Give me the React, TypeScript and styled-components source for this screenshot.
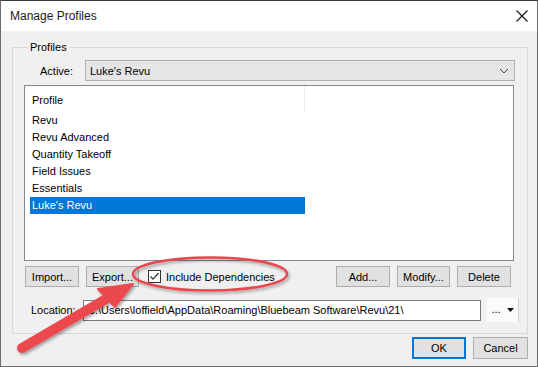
import styled, { createGlobalStyle } from "styled-components";

const GlobalStyle = createGlobalStyle`
  html, body {
    margin: 0;
    padding: 0;
    background: #ffffff;
  }
  * {
    box-sizing: border-box;
  }
`;

const profiles = [
  "Revu",
  "Revu Advanced",
  "Quantity Takeoff",
  "Field Issues",
  "Essentials",
  "Luke's Revu",
];

export default function App() {
  return (
    <>
      <GlobalStyle />
      <Window>
        <TitleBar>
          <Title>Manage Profiles</Title>
          <CloseButton>
            <svg width="12" height="12" viewBox="0 0 12 12">
              <path d="M0.5 0.5 L11.5 11.5 M11.5 0.5 L0.5 11.5" stroke="#111" strokeWidth="1.1" />
            </svg>
          </CloseButton>
        </TitleBar>
        <Body>
          <GroupBox>
            <Legend>Profiles</Legend>
            <ActiveRow>
              <FieldLabel $width={61}>Active:</FieldLabel>
              <Combo>
                <span>Luke's Revu</span>
                <svg width="10" height="6" viewBox="0 0 10 6">
                  <path d="M1 1 L5 5 L9 1" stroke="#444" strokeWidth="1" fill="none" />
                </svg>
              </Combo>
            </ActiveRow>
            <ListBox>
              <ListHeader>
                <HeaderCell>Profile</HeaderCell>
              </ListHeader>
              {profiles.map((p) => (
                <ListItem key={p} $selected={p === "Luke's Revu"}>
                  {p}
                </ListItem>
              ))}
            </ListBox>
            <ButtonRow>
              <Button $width={54}>Import...</Button>
              <Button $width={53}>Export...</Button>
              <CheckLabel>
                <CheckBox>
                  <svg width="11" height="11" viewBox="0 0 11 11">
                    <path d="M1.5 5.5 L4 8.2 L9.5 2" stroke="#333" strokeWidth="1.2" fill="none" />
                  </svg>
                </CheckBox>
                Include Dependencies
              </CheckLabel>
              <Spacer />
              <Button $width={54}>Add...</Button>
              <Button $width={53}>Modify...</Button>
              <Button $width={54}>Delete</Button>
            </ButtonRow>
            <LocationRow>
              <FieldLabel $width={59} $align="left">Location:</FieldLabel>
              <PathField>C:\Users\loffield\AppData\Roaming\Bluebeam Software\Revu\21\</PathField>
              <SplitButton>
                <span>...</span>
                <svg width="7" height="4" viewBox="0 0 7 4">
                  <path d="M0 0 L7 0 L3.5 4 Z" fill="#111" />
                </svg>
              </SplitButton>
            </LocationRow>
          </GroupBox>
          <Footer>
            <Button $width={54} $height={22} $default>OK</Button>
            <Button $width={55} $height={22}>Cancel</Button>
          </Footer>
        </Body>
        <Annotation width="538" height="367" viewBox="0 0 538 367">
          <defs>
            <filter id="shadow" x="-20%" y="-20%" width="140%" height="140%">
              <feDropShadow dx="1.5" dy="2" stdDeviation="1.5" floodColor="#000" floodOpacity="0.35" />
            </filter>
          </defs>
          <g filter="url(#shadow)">
            <ellipse cx="210" cy="274" rx="77" ry="16.5" fill="none" stroke="#e8474c" strokeWidth="2.5" />
            <path d="M22 348 L106 299" stroke="#ec4a4f" strokeWidth="10" strokeLinecap="round" />
            <path d="M133 284 L98 289 L115 307 Z" fill="#ec4a4f" stroke="#ec4a4f" strokeWidth="2" strokeLinejoin="round" />
          </g>
        </Annotation>
      </Window>
    </>
  );
}

const Window = styled.div`
  position: relative;
  width: 538px;
  height: 367px;
  border: 1px solid #6b6b6b;
  border-top-color: #3a3a3a;
  background: #f0f0f0;
  font-family: "Liberation Sans", Arial, sans-serif;
  font-size: 11px;
  color: #000;
  display: flex;
  flex-direction: column;
  overflow: hidden;
`;

const TitleBar = styled.div`
  height: 30px;
  background: #ffffff;
  display: flex;
  align-items: center;
  justify-content: space-between;
  padding: 0 9px 0 9px;
`;

const Title = styled.div`
  font-size: 12px;
  color: #1a1a1a;
`;

const CloseButton = styled.div`
  display: flex;
  align-items: center;
`;

const Body = styled.div`
  flex: 1;
  padding: 9px 9px 0 11px;
  display: flex;
  flex-direction: column;
`;

const GroupBox = styled.fieldset`
  margin: 0;
  min-width: 0;
  border: 1px solid #d9d9d9;
  padding: 6px 13px 11px 11px;
  display: flex;
  flex-direction: column;
`;

const Legend = styled.legend`
  padding: 0 2px;
  margin-left: 4px;
  line-height: 14px;
`;

const ActiveRow = styled.div`
  display: flex;
  align-items: center;
  height: 21px;
  margin-right: -1px;
`;

const FieldLabel = styled.div<{ $width: number; $align?: string }>`
  width: ${(p) => p.$width}px;
  flex: none;
  text-align: ${(p) => p.$align || "right"};
  padding-right: ${(p) => (p.$align === "left" ? 0 : 12)}px;
  padding-left: ${(p) => (p.$align === "left" ? 7 : 0)}px;
`;

const Combo = styled.div`
  flex: 1;
  height: 21px;
  background: #e5e5e5;
  border: 1px solid #adadad;
  display: flex;
  align-items: center;
  justify-content: space-between;
  padding: 0 5px 0 4px;
`;

const ListBox = styled.div`
  margin-top: 4px;
  height: 176px;
  background: #fff;
  border: 1px solid #828790;
  padding: 0 5px;
`;

const ListHeader = styled.div`
  height: 26px;
  display: flex;
  align-items: center;
`;

const HeaderCell = styled.div`
  width: 275px;
  height: 26px;
  display: flex;
  align-items: center;
  padding: 2px 0 0 2px;
  border-right: 1px solid #ececec;
`;

const ListItem = styled.div<{ $selected?: boolean }>`
  width: 275px;
  height: 17px;
  line-height: 17px;
  padding-left: 2px;
  background: ${(p) => (p.$selected ? "#0078d7" : "transparent")};
  color: ${(p) => (p.$selected ? "#fff" : "#000")};
`;

const ButtonRow = styled.div`
  display: flex;
  align-items: center;
  gap: 7px;
  margin-top: 5px;
  padding-left: 1px;
  padding-right: 3px;
`;

const Spacer = styled.div`
  flex: 1;
`;

const Button = styled.div<{ $width: number; $height?: number; $default?: boolean }>`
  width: ${(p) => p.$width}px;
  height: ${(p) => p.$height || 21}px;
  display: flex;
  align-items: center;
  justify-content: center;
  background: #e1e1e1;
  border: ${(p) => (p.$default ? "2px solid #0078d7" : "1px solid #adadad")};
`;

const CheckLabel = styled.div`
  display: flex;
  align-items: center;
  gap: 5px;
  margin-left: 2px;
`;

const CheckBox = styled.div`
  width: 13px;
  height: 13px;
  border: 1px solid #333;
  background: #fff;
  display: flex;
  align-items: center;
  justify-content: center;
`;

const LocationRow = styled.div`
  display: flex;
  align-items: center;
  margin-top: 11px;
  margin-right: -7px;
`;

const PathField = styled.div`
  width: 398px;
  height: 21px;
  background: #fff;
  border: 1px solid #7a7a7a;
  display: flex;
  align-items: center;
  padding-left: 3px;
  white-space: nowrap;
  overflow: hidden;
`;

const SplitButton = styled.div`
  margin-left: 6px;
  width: 32px;
  height: 24px;
  background: #fbfbfb;
  border-right: 1px solid #d0d0d0;
  display: flex;
  align-items: center;
  justify-content: center;
  gap: 6px;
  & > span {
    margin-top: -3px;
  }
`;

const Footer = styled.div`
  display: flex;
  justify-content: flex-end;
  gap: 7px;
  margin-top: 3px;
`;

const Annotation = styled.svg`
  position: absolute;
  left: -1px;
  top: -1px;
  pointer-events: none;
`;
